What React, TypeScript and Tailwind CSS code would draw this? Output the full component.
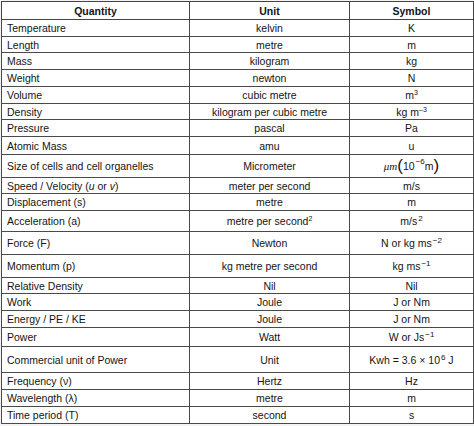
import type { ReactNode } from 'react'

type Row = { q: ReactNode; u: ReactNode; s: ReactNode; h: string }

const sup = (t: string) => <span className="text-[7px] relative -top-[4px] leading-none">{t}</span>
const msup = (t: string) => <span className="text-[8px] relative -top-[4px] leading-none ml-[1px]">{t}</span>

const rows: Row[] = [
  { q: 'Temperature', u: 'kelvin', s: 'K', h: 'h-[17px]' },
  { q: 'Length', u: 'metre', s: 'm', h: 'h-[16px]' },
  { q: 'Mass', u: 'kilogram', s: 'kg', h: 'h-[17px]' },
  { q: 'Weight', u: 'newton', s: 'N', h: 'h-[17px]' },
  { q: 'Volume', u: 'cubic metre', s: <>m{sup('3')}</>, h: 'h-[17px]' },
  { q: 'Density', u: 'kilogram per cubic metre', s: <>kg m{sup('–3')}</>, h: 'h-[16px]' },
  { q: 'Pressure', u: 'pascal', s: 'Pa', h: 'h-[17px]' },
  { q: 'Atomic Mass', u: 'amu', s: 'u', h: 'h-[18px]' },
  {
    q: 'Size of cells and cell organelles',
    u: 'Micrometer',
    s: (
      <span className="inline-flex items-center">
        <i className="font-['Liberation_Serif',serif] text-[11px]">μm</i>
        <span className="text-[17px] leading-none font-light -mt-[2px]">(</span>
        10{msup('−6')}m
        <span className="text-[17px] leading-none font-light -mt-[2px]">)</span>
      </span>
    ),
    h: 'h-[23px]',
  },
  { q: <>Speed / Velocity (<i>u</i> or <i>v</i>)</>, u: 'meter per second', s: 'm/s', h: 'h-[16px]' },
  { q: 'Displacement (s)', u: 'metre', s: 'm', h: 'h-[17px]' },
  { q: 'Acceleration (a)', u: <>metre per second{sup('2')}</>, s: <>m/s{msup('2')}</>, h: 'h-[21px]' },
  { q: 'Force (F)', u: 'Newton', s: <>N or kg ms{msup('−2')}</>, h: 'h-[23px]' },
  { q: 'Momentum (p)', u: 'kg metre per second', s: <>kg ms{msup('−1')}</>, h: 'h-[23px]' },
  { q: 'Relative Density', u: 'Nil', s: 'Nil', h: 'h-[16px]' },
  { q: 'Work', u: 'Joule', s: 'J or Nm', h: 'h-[17px]' },
  { q: 'Energy / PE / KE', u: 'Joule', s: 'J or Nm', h: 'h-[17px]' },
  { q: 'Power', u: 'Watt', s: <>W or Js{msup('−1')}</>, h: 'h-[19px]' },
  {
    q: 'Commercial unit of Power',
    u: 'Unit',
    s: <>Kwh = 3.6 × 10{msup('6')} J</>,
    h: 'h-[26px]',
  },
  { q: 'Frequency (ν)', u: 'Hertz', s: 'Hz', h: 'h-[17px]' },
  { q: 'Wavelength (λ)', u: 'metre', s: 'm', h: 'h-[17px]' },
  { q: 'Time period (T)', u: 'second', s: 's', h: 'h-[17px]' },
]

export default function App() {
  return (
    <div className="w-[474px] h-[426px] bg-[#f4f4f4] pt-[1px] pl-[1px] font-['Liberation_Sans',Arial,sans-serif] text-[10.5px] leading-[12px] text-[#141414]">
      <table className="w-[472px] bg-white border-collapse table-fixed">
        <colgroup>
          <col className="w-[188px]" />
          <col className="w-[160px]" />
          <col className="w-[124px]" />
        </colgroup>
        <thead>
          <tr className="h-[18px] font-bold">
            <th className="border border-[#444] p-0 text-center">Quantity</th>
            <th className="border border-[#444] p-0 text-center">Unit</th>
            <th className="border border-[#444] p-0 text-center">Symbol</th>
          </tr>
        </thead>
        <tbody>
          {rows.map((r, i) => (
            <tr key={i} className={r.h}>
              <td className="border border-[#4a4a4a] py-0 pl-[5px] pr-0 whitespace-nowrap">{r.q}</td>
              <td className="border border-[#4a4a4a] p-0 text-center whitespace-nowrap">{r.u}</td>
              <td className="border border-[#4a4a4a] p-0 text-center whitespace-nowrap">{r.s}</td>
            </tr>
          ))}
        </tbody>
      </table>
    </div>
  )
}
